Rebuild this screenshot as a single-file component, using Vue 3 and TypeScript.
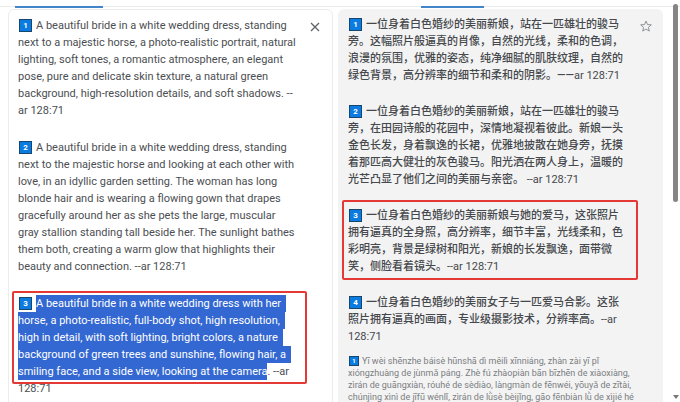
<script setup lang="ts">
interface Prompt {
  id: number
  lines: string[]
  framed?: boolean
}

const source: Prompt[] = [
  {
    id: 1,
    lines: [
      'A beautiful bride in a white wedding dress, standing',
      'next to a majestic horse, a photo-realistic portrait, natural',
      'lighting, soft tones, a romantic atmosphere, an elegant',
      'pose, pure and delicate skin texture, a natural green',
      'background, high-resolution details, and soft shadows. --',
      'ar 128:71',
    ],
  },
  {
    id: 2,
    lines: [
      'A beautiful bride in a white wedding dress, standing',
      'next to the majestic horse and looking at each other with',
      'love, in an idyllic garden setting. The woman has long',
      'blonde hair and is wearing a flowing gown that drapes',
      'gracefully around her as she pets the large, muscular',
      'gray stallion standing tall beside her. The sunlight bathes',
      'them both, creating a warm glow that highlights their',
      'beauty and connection. --ar 128:71',
    ],
  },
]

const selected: string[] = [
  'A beautiful bride in a white wedding dress with her',
  'horse, a photo-realistic, full-body shot, high resolution,',
  'high in detail, with soft lighting, bright colors, a nature',
  'background of green trees and sunshine, flowing hair, a',
  'smiling face, and a side view, looking at the camera',
]

const translated: Prompt[] = [
  {
    id: 1,
    lines: [
      '一位身着白色婚纱的美丽新娘，站在一匹雄壮的骏马',
      '旁。这幅照片般逼真的肖像，自然的光线，柔和的色调，',
      '浪漫的氛围，优雅的姿态，纯净细腻的肌肤纹理，自然的',
      '绿色背景，高分辨率的细节和柔和的阴影。——ar 128:71',
    ],
  },
  {
    id: 2,
    lines: [
      '一位身着白色婚纱的美丽新娘，站在一匹雄壮的骏马',
      '旁，在田园诗般的花园中，深情地凝视着彼此。新娘一头',
      '金色长发，身着飘逸的长裙，优雅地披散在她身旁，抚摸',
      '着那匹高大健壮的灰色骏马。阳光洒在两人身上，温暖的',
      '光芒凸显了他们之间的美丽与亲密。 --ar 128:71',
    ],
  },
  {
    id: 3,
    framed: true,
    lines: [
      '一位身着白色婚纱的美丽新娘与她的爱马，这张照片',
      '拥有逼真的全身照，高分辨率，细节丰富，光线柔和，色',
      '彩明亮，背景是绿树和阳光，新娘的长发飘逸，面带微',
      '笑，侧脸看着镜头。--ar 128:71',
    ],
  },
  {
    id: 4,
    lines: [
      '一位身着白色婚纱的美丽女子与一匹爱马合影。这张',
      '照片拥有逼真的画面，专业级摄影技术，分辨率高。--ar',
      '128:71',
    ],
  },
]

const pinyin: string[] = [
  'Yī wèi shēnzhe báisè hūnshā dì měilì xīnniáng, zhàn zài yī pǐ',
  'xióngzhuàng de jùnmǎ páng. Zhè fú zhàopiàn bān bīzhēn de xiàoxiàng,',
  'zìrán de guāngxiàn, róuhé de sèdiào, làngmàn de fēnwéi, yōuyǎ de zītài,',
  'chúnjìng xìnì de jīfū wénlǐ, zìrán de lǜsè bèijǐng, gāo fēnbiàn lǜ de xìjié hé',
]

// Splits a translated line into its Chinese text and the Latin parameters after it.
function splitLine(line: string): [string, string] {
  const at = line.search(/[ -]*[a-z0-9][a-z0-9: ]*$/)
  return at < 0 ? [line, ''] : [line.slice(0, at), line.slice(at)]
}
</script>

<template>
  <main class="page">
    <div class="tabs">
      <div class="tab-side"><span class="tab-line source-line"></span></div>
      <div class="tab-side"><span class="tab-line target-line"></span></div>
    </div>
    <div class="columns">
      <section class="card source">
        <div class="prompts">
          <p v-for="p in source" :key="p.id">
            <span v-for="(line, i) in p.lines" :key="i" class="line"
              ><b v-if="i === 0" class="badge">{{ p.id }}</b>{{ line }}</span
            >
          </p>
          <p class="framed">
            <span v-for="(line, i) in selected" :key="i" class="line"
              ><b v-if="i === 0" class="badge">3</b
              ><mark :class="{ open: i < selected.length - 1 }">{{ line }}</mark
              ><template v-if="i === selected.length - 1">. --ar</template></span
            >
            <span class="line">128:71</span>
          </p>
        </div>
        <button class="icon-button" type="button" aria-label="Clear">
          <svg width="10" height="10" viewBox="0 0 10 10">
            <path d="M1 1 L9 9 M9 1 L1 9" fill="none" stroke="#5f6368" stroke-width="1.3" />
          </svg>
        </button>
      </section>
      <section class="card target">
        <div class="prompts" lang="zh-CN">
          <p v-for="p in translated" :key="p.id" :class="{ framed: p.framed }">
            <span v-for="(line, i) in p.lines" :key="i" class="line"
              ><b v-if="i === 0" class="badge">{{ p.id }}</b>{{ splitLine(line)[0]
              }}<span class="latin">{{ splitLine(line)[1] }}</span></span
            >
          </p>
          <p class="pinyin">
            <span v-for="(line, i) in pinyin" :key="i" class="line"
              ><b v-if="i === 0" class="badge">1</b>{{ line }}</span
            >
          </p>
        </div>
        <button class="icon-button" type="button" aria-label="Save">
          <svg width="12" height="12" viewBox="0 0 24 24">
            <path
              d="M12 2 L15 9.1 L22.6 9.7 L16.8 14.7 L18.6 22.2 L12 18.2 L5.4 22.2 L7.2 14.7 L1.4 9.7 L9 9.1 Z"
              fill="none"
              stroke="#8a8d91"
              stroke-width="1.9"
            />
          </svg>
        </button>
      </section>
    </div>
    <div class="scrollbar" aria-hidden="true">
      <span class="thumb"></span>
      <svg width="6" height="4" viewBox="0 0 6 4"><path d="M0 0 H6 L3 4 Z" fill="#777" /></svg>
    </div>
  </main>
</template>

<style>
body {
  background: #fff;
  overflow: hidden;
}
</style>

<style scoped>
.page {
  position: relative;
  box-sizing: border-box;
  height: 100vh;
  overflow: hidden;
  padding: 0 17px 0 8px;
  color: #4b4e52;
  font: 11px/17px Roboto, 'Noto Sans CJK SC', sans-serif;
}
.tabs {
  display: grid;
  grid-template-columns: 1fr 1fr;
  gap: 5px;
  height: 6px;
  margin: 0 -17px 0 -8px;
  padding: 0 17px 0 8px;
  border-bottom: 1px solid #ececec;
}
.tab-side {
  display: flex;
  align-items: flex-start;
  padding-top: 6px;
}
.tab-line {
  height: 2px;
  background: #4285c8;
}
.source-line {
  width: 88px;
  margin-left: 7px;
}
.target-line {
  width: 63px;
  margin-left: 83px;
}
.columns {
  display: grid;
  grid-template-columns: 1fr 1fr;
  gap: 5px;
  padding-top: 2px;
}
.card {
  display: flex;
  align-items: flex-start;
  gap: 12px;
  box-sizing: border-box;
  min-width: 0;
  min-height: 100vh;
  padding: 7px 11px 0 10px;
  border-radius: 6px;
}
.source {
  border: 1px solid #ececec;
  padding-left: 9px;
}
.target {
  background: #f3f3f3;
}
.prompts {
  display: flex;
  flex: 1;
  flex-direction: column;
  gap: 20px;
  min-width: 0;
}
.target .prompts {
  gap: 19px;
  color: #45484c;
  font-weight: 500;
}
p {
  position: relative;
  margin: 0;
}
.line {
  display: block;
  height: 17px;
  white-space: pre;
}
.latin {
  font-weight: 400;
}
.badge {
  display: inline-block;
  box-sizing: border-box;
  width: 13px;
  height: 13px;
  margin: 0 4px 0 1px;
  border: 1px solid #17466f;
  background: #0a7be0;
  color: #fff;
  font: 700 8px/11px Roboto, sans-serif;
  text-align: center;
  vertical-align: 1px;
}
mark {
  display: inline-block;
  height: 17px;
  background: #3367d1;
  color: #fff;
}
.open {
  padding-right: 5px;
}
.framed::after {
  content: '';
  position: absolute;
  inset: -4px -10px 13px -6px;
  border: 2px solid #e53935;
  border-radius: 2px;
}
.target .framed::after {
  inset: -7px -10px -5px -6px;
}
.target .pinyin {
  margin-top: -9px;
  color: #7b7e82;
  font-family: Roboto, 'Noto Sans', sans-serif;
  font-size: 9px;
  font-weight: 400;
  line-height: 12px;
}
.pinyin .line {
  height: 12px;
}
.pinyin .badge {
  width: 10px;
  height: 10px;
  margin-right: 3px;
  font-size: 6px;
  line-height: 8px;
}
.icon-button {
  display: flex;
  flex: none;
  align-items: center;
  justify-content: center;
  width: 12px;
  height: 12px;
  margin-top: 4px;
  padding: 0;
  border: 0;
  background: none;
}
.scrollbar {
  position: absolute;
  top: 4px;
  right: 2px;
  bottom: 3px;
  display: flex;
  flex-direction: column;
  align-items: center;
  justify-content: space-between;
  width: 5px;
}
.thumb {
  width: 5px;
  height: 50%;
  border-radius: 3px;
  background: #858585;
}
</style>
